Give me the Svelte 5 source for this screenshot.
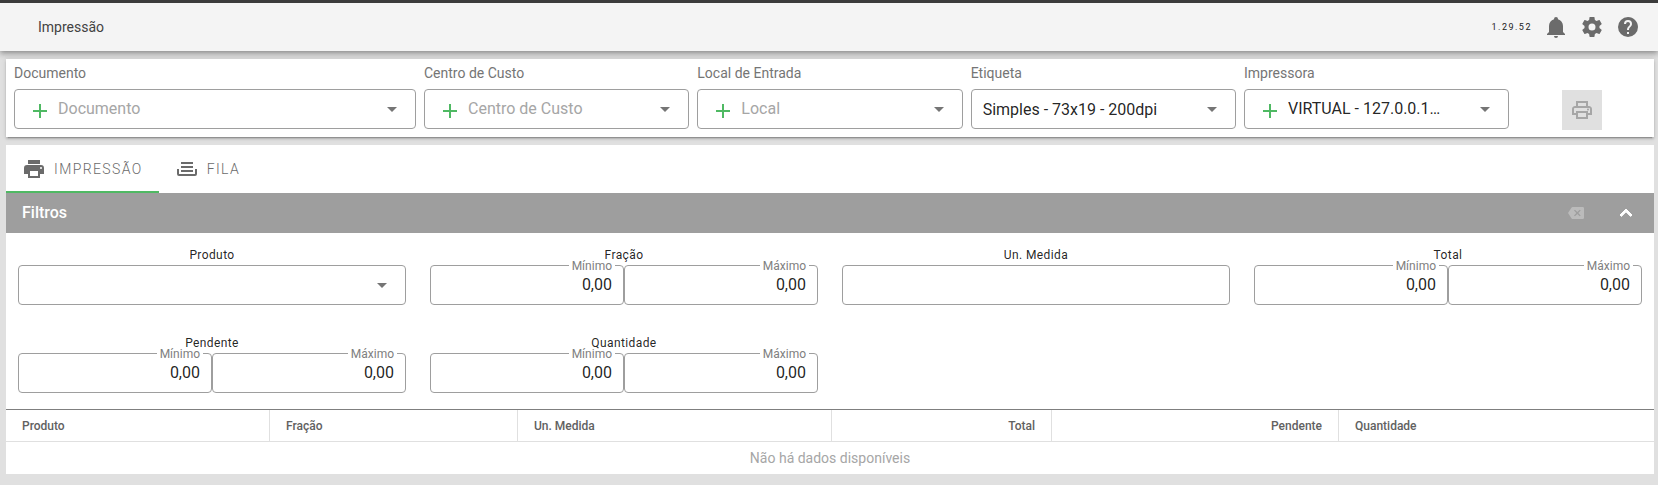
<script lang="ts">
	const icons = {
		bell: 'M21,19V20H3V19L5,17V11C5,7.9 7.03,5.17 10,4.29C10,4.19 10,4.1 10,4A2,2 0 0,1 12,2A2,2 0 0,1 14,4C14,4.1 14,4.19 14,4.29C16.97,5.17 19,7.9 19,11V17L21,19M14,21A2,2 0 0,1 12,23A2,2 0 0,1 10,21',
		cog: 'M12,15.5A3.5,3.5 0 0,1 8.5,12A3.5,3.5 0 0,1 12,8.5A3.5,3.5 0 0,1 15.5,12A3.5,3.5 0 0,1 12,15.5M19.43,12.97C19.47,12.65 19.5,12.33 19.5,12C19.5,11.67 19.47,11.34 19.43,11L21.54,9.37C21.73,9.22 21.78,8.95 21.66,8.73L19.66,5.27C19.54,5.05 19.27,4.96 19.05,5.05L16.56,6.05C16.04,5.66 15.5,5.32 14.87,5.07L14.5,2.42C14.46,2.18 14.25,2 14,2H10C9.75,2 9.54,2.18 9.5,2.42L9.13,5.07C8.5,5.32 7.96,5.66 7.44,6.05L4.95,5.05C4.73,4.96 4.46,5.05 4.34,5.27L2.34,8.73C2.21,8.95 2.27,9.22 2.46,9.37L4.57,11C4.53,11.34 4.5,11.67 4.5,12C4.5,12.33 4.53,12.65 4.57,12.97L2.46,14.63C2.27,14.78 2.21,15.05 2.34,15.27L4.34,18.73C4.46,18.95 4.73,19.03 4.95,18.95L7.44,17.94C7.96,18.34 8.5,18.68 9.13,18.93L9.5,21.58C9.54,21.82 9.75,22 10,22H14C14.25,22 14.46,21.82 14.5,21.58L14.87,18.93C15.5,18.67 16.04,18.34 16.56,17.94L19.05,18.95C19.27,19.03 19.54,18.95 19.66,18.73L21.66,15.27C21.78,15.05 21.73,14.78 21.54,14.63L19.43,12.97Z',
		help: 'M15.07,11.25L14.17,12.17C13.45,12.89 13,13.5 13,15H11V14.5C11,13.39 11.45,12.39 12.17,11.67L13.41,10.41C13.78,10.05 14,9.55 14,9C14,7.89 13.1,7 12,7A2,2 0 0,0 10,9H8A4,4 0 0,1 12,5A4,4 0 0,1 16,9C16,9.88 15.64,10.67 15.07,11.25M13,19H11V17H13M12,2A10,10 0 0,0 2,12A10,10 0 0,0 12,22A10,10 0 0,0 22,12C22,6.47 17.5,2 12,2Z',
		plus: 'M19,13H13V19H11V13H5V11H11V5H13V11H19V13Z',
		menuDown: 'M7,10L12,15L17,10H7Z',
		printer: 'M18,3H6V7H18M19,12A1,1 0 0,1 18,11A1,1 0 0,1 19,10A1,1 0 0,1 20,11A1,1 0 0,1 19,12M16,19H8V14H16M19,8H5A3,3 0 0,0 2,11V17H6V21H18V17H22V11A3,3 0 0,0 19,8Z',
		printerOutline: 'M19 8C20.66 8 22 9.34 22 11V17H18V21H6V17H2V11C2 9.34 3.34 8 5 8H6V3H18V8H19M8 5V8H16V5H8M16 19V15H8V19H16M18 15H20V11C20 10.45 19.55 10 19 10H5C4.45 10 4 10.45 4 11V15H6V13H18V15M19 11.5C19 12.05 18.55 12.5 18 12.5C17.45 12.5 17 12.05 17 11.5C17 10.95 17.45 10.5 18 10.5C18.55 10.5 19 10.95 19 11.5Z',
		tray: 'M18 5H6V7H18M6 9H18V11H6M2 12H4V17H20V12H22V17A2 2 0 0 1 20 19H4A2 2 0 0 1 2 17M18 13H6V15H18Z',
		backspace: 'M22,3H7C6.31,3 5.77,3.35 5.41,3.88L0,12L5.41,20.11C5.77,20.64 6.31,21 7,21H22A2,2 0 0,0 24,19V5A2,2 0 0,0 22,3M19,15.59L17.59,17L14,13.41L10.41,17L9,15.59L12.59,12L9,8.41L10.41,7L14,10.59L17.59,7L19,8.41L15.41,12',
		chevronUp: 'M7.41,15.41L12,10.83L16.59,15.41L18,14L12,8L6,14L7.41,15.41Z'
	};

	const selects = [
		{ id: 'documento', label: 'Documento', text: 'Documento', add: true, empty: true },
		{ id: 'centro', label: 'Centro de Custo', text: 'Centro de Custo', add: true, empty: true },
		{ id: 'local', label: 'Local de Entrada', text: 'Local', add: true, empty: true },
		{ id: 'etiqueta', label: 'Etiqueta', text: 'Simples - 73x19 - 200dpi', add: false, empty: false },
		{ id: 'impressora', label: 'Impressora', text: 'VIRTUAL - 127.0.0.1…', add: true, empty: false }
	];

	const filters = [
		{ id: 'f-produto', label: 'Produto', type: 'select' },
		{ id: 'f-fracao', label: 'Fração', type: 'range' },
		{ id: 'f-unidade', label: 'Un. Medida', type: 'text' },
		{ id: 'f-total', label: 'Total', type: 'range' },
		{ id: 'f-pendente', label: 'Pendente', type: 'range' },
		{ id: 'f-quantidade', label: 'Quantidade', type: 'range' }
	];

	const columns = [
		{ label: 'Produto', width: 264 },
		{ label: 'Fração', width: 248 },
		{ label: 'Un. Medida', width: 314 },
		{ label: 'Total', width: 220, right: true },
		{ label: 'Pendente', width: 287, right: true },
		{ label: 'Quantidade', width: 315 }
	];
	const total = columns.reduce((sum, c) => sum + c.width, 0);

	let tab = $state('impressao');
	let open = $state(true);
</script>

{#snippet icon(name: keyof typeof icons, size = 24)}
	<svg width={size} height={size} viewBox="0 0 24 24" fill="currentColor" aria-hidden="true">
		<path d={icons[name]} />
	</svg>
{/snippet}

<header class="topbar">
	<h1>Impressão</h1>
	<div class="actions">
		<span class="version">1.29.52</span>
		<button type="button" aria-label="Notificações">{@render icon('bell')}</button>
		<button type="button" aria-label="Configurações">{@render icon('cog')}</button>
		<button type="button" aria-label="Ajuda">{@render icon('help')}</button>
	</div>
</header>

<main>
	<section class="setup">
		{#each selects as s}
			<div class="field">
				<label for={s.id}>{s.label}</label>
				<div class="box">
					{#if s.add}
						<button type="button" class="add" aria-label="Adicionar">{@render icon('plus')}</button>
					{/if}
					<select id={s.id} class:empty={s.empty} class:added={s.add}>
						<option>{s.text}</option>
					</select>
					<span class="caret">{@render icon('menuDown')}</span>
				</div>
			</div>
		{/each}
		<div class="print">
			<button type="button" disabled aria-label="Imprimir">{@render icon('printerOutline')}</button>
		</div>
	</section>

	<section class="panel">
		<div class="tabs" role="tablist">
			<button type="button" role="tab" class:active={tab === 'impressao'} aria-selected={tab === 'impressao'} onclick={() => (tab = 'impressao')}>
				{@render icon('printer')}Impressão
			</button>
			<button type="button" role="tab" class:active={tab === 'fila'} aria-selected={tab === 'fila'} onclick={() => (tab = 'fila')}>
				{@render icon('tray')}Fila
			</button>
		</div>

		<div class="bar">
			<h2>Filtros</h2>
			<button type="button" class="clear" disabled aria-label="Limpar filtros">{@render icon('backspace', 16)}</button>
			<button type="button" class="toggle" aria-label="Recolher filtros" aria-expanded={open} onclick={() => (open = !open)}>
				{@render icon('chevronUp')}
			</button>
		</div>

		{#if open}
			<div class="filters">
				{#each filters as f}
					<div class="filter">
						{#if f.type === 'range'}
							<span class="title">{f.label}</span>
							<div class="range">
								<fieldset>
									<legend><label for="{f.id}-min">Mínimo</label></legend>
									<input id="{f.id}-min" inputmode="decimal" value="0,00" />
								</fieldset>
								<fieldset>
									<legend><label for="{f.id}-max">Máximo</label></legend>
									<input id="{f.id}-max" inputmode="decimal" value="0,00" />
								</fieldset>
							</div>
						{:else}
							<label class="title" for={f.id}>{f.label}</label>
							<div class="box">
								{#if f.type === 'select'}
									<select id={f.id}><option></option></select>
									<span class="caret">{@render icon('menuDown')}</span>
								{:else}
									<input id={f.id} type="text" />
								{/if}
							</div>
						{/if}
					</div>
				{/each}
			</div>
		{/if}

		<table>
			<colgroup>
				{#each columns as c}
					<col style="width: {(c.width / total) * 100}%" />
				{/each}
			</colgroup>
			<thead>
				<tr>
					{#each columns as c}
						<th class:right={c.right}>{c.label}</th>
					{/each}
				</tr>
			</thead>
			<tbody>
				<tr>
					<td colspan={columns.length}>Não há dados disponíveis</td>
				</tr>
			</tbody>
		</table>
	</section>
</main>

<style>
	:global(body) {
		background: #e0e0e0;
		color: rgba(0, 0, 0, 0.87);
		font-family: Roboto, 'Liberation Sans', sans-serif;
		font-size: 16px;
	}
	h1,
	h2 {
		margin: 0;
	}
	svg {
		display: block;
		flex: none;
	}
	button {
		border: 0;
		padding: 0;
		background: none;
		color: inherit;
		font: inherit;
		cursor: pointer;
	}
	button[disabled] {
		cursor: default;
	}
	.topbar {
		display: flex;
		align-items: center;
		justify-content: space-between;
		height: 48px;
		padding: 0 18px 0 38px;
		border-top: 3px solid #3b3b3b;
		background: #f4f4f4;
		box-shadow:
			0 2px 4px -1px rgba(0, 0, 0, 0.2),
			0 4px 5px 0 rgba(0, 0, 0, 0.14),
			0 1px 10px 0 rgba(0, 0, 0, 0.12);
	}
	h1 {
		color: #424242;
		font-size: 14px;
		font-weight: 400;
	}
	.actions {
		display: flex;
		align-items: center;
		gap: 12px;
		color: #6b6b6b;
	}
	.version {
		color: #212121;
		font-size: 9px;
		letter-spacing: 0.1667em;
	}
	main {
		display: grid;
		gap: 8px;
		padding: 8px 4px 11px 6px;
	}
	.setup {
		display: grid;
		grid-template-columns: 3fr 2fr 2fr 2fr 2fr 1fr;
		padding: 4px;
		background: #fff;
		box-shadow:
			0 3px 1px -2px rgba(0, 0, 0, 0.2),
			0 2px 2px 0 rgba(0, 0, 0, 0.14),
			0 1px 5px 0 rgba(0, 0, 0, 0.12);
	}
	.field {
		min-width: 0;
		padding: 0 4px 4px;
	}
	.field > label {
		display: block;
		padding-bottom: 6px;
		color: #757575;
		font-size: 14px;
		line-height: 20px;
	}
	.box {
		position: relative;
		display: flex;
		align-items: center;
		box-sizing: border-box;
		height: 40px;
		border: 1px solid #9e9e9e;
		border-radius: 4px;
	}
	.add {
		position: absolute;
		top: 9px;
		left: 13px;
		color: #4fb963;
	}
	.caret {
		position: absolute;
		right: 11px;
		color: #757575;
		pointer-events: none;
	}
	select,
	input {
		appearance: none;
		box-sizing: border-box;
		width: 100%;
		height: 100%;
		min-width: 0;
		border: 0;
		padding: 0 11px;
		background: none;
		color: rgba(0, 0, 0, 0.87);
		font: inherit;
		outline: 0;
	}
	.added {
		padding: 0 40px 2px 43px;
	}
	.empty {
		color: #a6a6a6;
	}
	.print {
		display: flex;
		justify-content: center;
		align-items: flex-end;
		padding-bottom: 3px;
	}
	.print button {
		display: grid;
		place-items: center;
		width: 40px;
		height: 40px;
		background: #e0e0e0;
		color: #a6a6a6;
	}
	.panel {
		background: #fff;
	}
	.tabs {
		display: flex;
	}
	.tabs button {
		display: flex;
		align-items: center;
		gap: 8px;
		box-sizing: border-box;
		height: 48px;
		padding: 2px 16px 0;
		border-bottom: 2px solid transparent;
		color: #6b6b6b;
		font-size: 14px;
		font-weight: 300;
		letter-spacing: 0.1em;
		text-transform: uppercase;
	}
	.tabs .active {
		border-color: #4fb963;
	}
	.bar {
		display: flex;
		align-items: center;
		height: 40px;
		padding: 0 16px;
		background: #9e9e9e;
		color: #fff;
	}
	h2 {
		flex: 1;
		padding-bottom: 2px;
		font-size: 16px;
		font-weight: 500;
	}
	.clear {
		margin-right: 30px;
		opacity: 0.3;
	}
	.toggle path {
		stroke: currentColor;
		stroke-width: 1;
	}
	.filters {
		display: grid;
		grid-template-columns: repeat(4, 1fr);
		padding-bottom: 16px;
	}
	.filter {
		min-width: 0;
		padding: 12px 12px 0;
	}
	.filter + .filter:nth-child(n + 5) {
		padding-top: 28px;
	}
	.title {
		display: block;
		font-size: 12px;
		letter-spacing: 0.0333em;
		line-height: 20px;
		text-align: center;
	}
	.range {
		display: flex;
	}
	fieldset {
		flex: 1;
		box-sizing: border-box;
		min-width: 0;
		height: 40px;
		margin: 0;
		border: 1px solid #9e9e9e;
		border-radius: 4px;
		padding: 0;
	}
	legend {
		height: 1px;
		margin: 0 8px 0 auto;
		padding: 0 3px;
		color: #808080;
		font-size: 12px;
		line-height: 3px;
	}
	fieldset input {
		padding-bottom: 2px;
		text-align: right;
	}
	table {
		width: 100%;
		border-collapse: separate;
		border-spacing: 0;
		border-top: 1px solid #7f7f7f;
		table-layout: fixed;
	}
	th {
		height: 31px;
		padding: 0 16px;
		border-right: 1px solid #e0e0e0;
		border-bottom: 1px solid #e0e0e0;
		color: #616161;
		font-size: 12px;
		font-weight: 500;
		text-align: left;
	}
	th:last-child {
		border-right: 0;
	}
	.right {
		text-align: right;
	}
	td {
		height: 32px;
		padding: 0;
		color: #a6a6a6;
		font-size: 14px;
		text-align: center;
	}
</style>
